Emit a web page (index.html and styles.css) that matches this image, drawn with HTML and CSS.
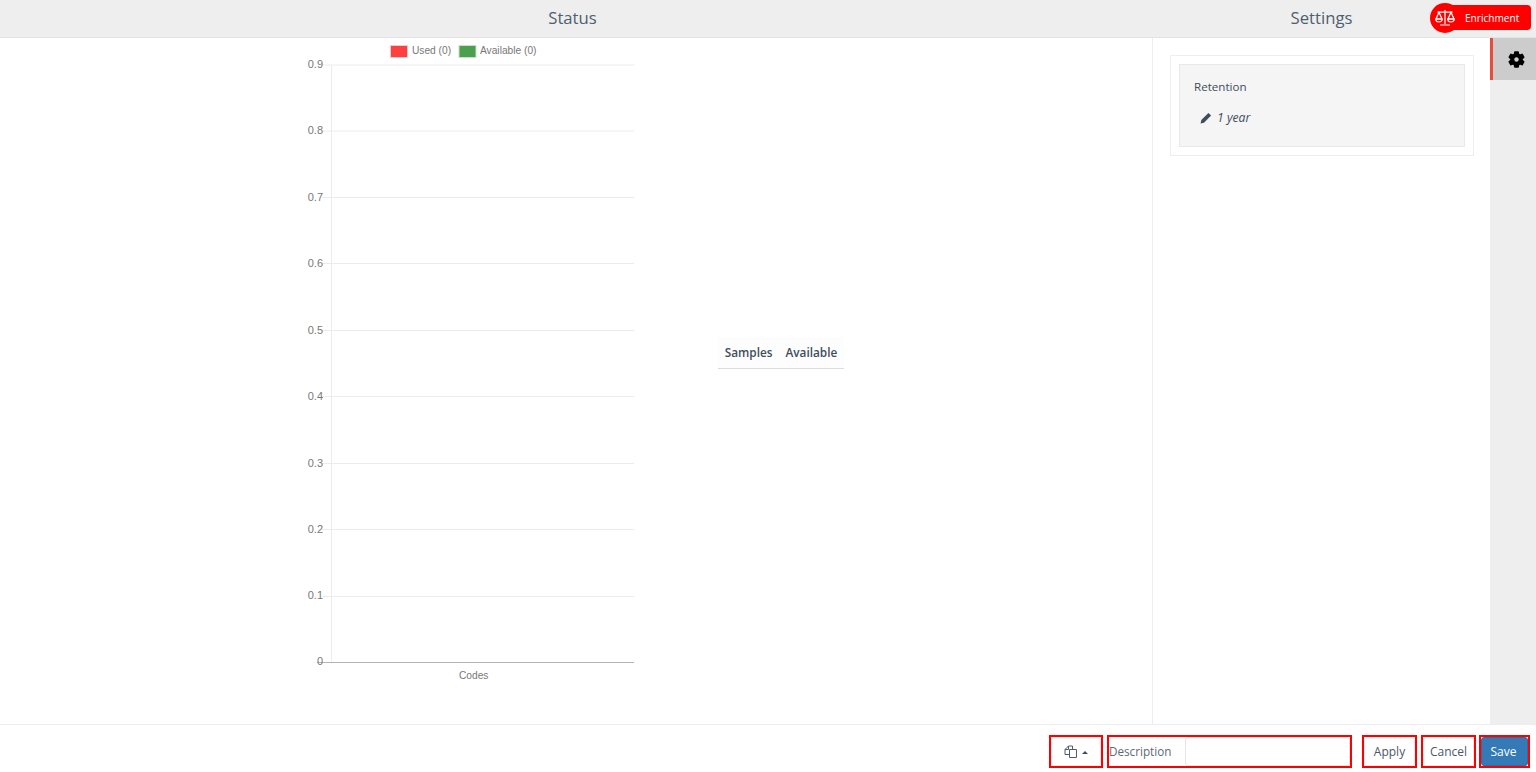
FILE: index.html
```html
<!DOCTYPE html>
<html lang="en">
<head>
<meta charset="utf-8">
<title>Status</title>
<link rel="stylesheet" href="styles.css">
</head>
<body>
<div class="app">
  <header class="head">
    <div class="head-status">Status</div>
    <div class="head-settings">Settings</div>
    <div class="head-rail"></div>
    <div class="enrich">
      <span class="enrich-icon">
        <svg width="20" height="18" viewBox="0 0 20 18" fill="none" stroke="#fff" stroke-width="1.2">
          <path d="M10 1v14M5 16h10M2.5 3.2h15"/>
          <path d="M4 3.2 1 10h6zM16 3.2 13 10h6z"/>
          <path d="M.7 10a3.3 3 0 0 0 6.6 0zM12.7 10a3.3 3 0 0 0 6.6 0z"/>
        </svg>
      </span>
      <span class="enrich-label">Enrichment</span>
    </div>
  </header>
  <main class="body">
    <section class="status">
      <svg class="chart" width="360" height="660" viewBox="290 38 360 660">
        <rect class="leg-red" x="390.5" y="45.5" width="17" height="12"/>
        <text class="lbl" x="412" y="54">Used (0)</text>
        <rect class="leg-green" x="459" y="45.5" width="17" height="12"/>
        <text class="lbl" x="480" y="54">Available (0)</text>
        <g class="grid">
          <path d="M322 65H634M322 131H634M322 197.500H634M322 263.500H634M322 330.500H634M322 396.500H634M322 463.500H634M322 529.500H634M322 596.500H634M331.500 65V662"/>
        </g>
        <path class="axis" d="M317 662H634"/>
        <g class="ticks">
          <text x="323" y="68">0.9</text>
          <text x="323" y="134">0.8</text>
          <text x="323" y="201">0.7</text>
          <text x="323" y="267">0.6</text>
          <text x="323" y="334">0.5</text>
          <text x="323" y="400">0.4</text>
          <text x="323" y="467">0.3</text>
          <text x="323" y="533">0.2</text>
          <text x="323" y="599">0.1</text>
          <text x="323" y="665">0</text>
        </g>
        <text class="lbl" x="459" y="679">Codes</text>
      </svg>
      <div class="samples">
        <span>Samples</span>
        <span>Available</span>
      </div>
    </section>
    <section class="settings">
      <div class="outer">
        <div class="well">
          <div class="well-title">Retention</div>
          <div class="well-value">
            <svg width="12" height="12" viewBox="0 0 12 12"><path fill="#3f4d5c" d="M8.400.9 11.100 3.600 4 10.700.6 11.400 1.300 8z"/></svg>
            <em>1 year</em>
          </div>
        </div>
      </div>
    </section>
    <nav class="rail">
      <div class="rail-tab">
        <svg width="19" height="19" viewBox="0 0 24 24"><path fill="#000" fill-rule="evenodd" stroke="#000" stroke-width="1.500" d="M19.140 12.940c.04-.3.06-.61.06-.94 0-.32-.02-.64-.07-.94l2.030-1.580c.18-.14.23-.41.12-.61l-1.920-3.320c-.12-.22-.37-.29-.59-.22l-2.390.96c-.5-.38-1.030-.7-1.620-.94l-.36-2.540c-.04-.24-.24-.41-.48-.41h-3.840c-.24 0-.43.17-.47.41l-.36 2.540c-.59.24-1.130.57-1.620.94l-2.390-.96c-.22-.08-.47 0-.59.22L2.740 8.870c-.12.21-.08.47.12.61l2.030 1.580c-.05.3-.09.63-.09.94s.02.64.07.94l-2.030 1.580c-.18.14-.23.41-.12.61l1.920 3.320c.12.22.37.29.59.22l2.390-.96c.5.38 1.030.7 1.620.94l.36 2.540c.05.24.24.41.48.41h3.840c.24 0 .44-.17.47-.41l.36-2.540c.59-.24 1.130-.56 1.620-.94l2.390.96c.22.08.47 0 .59-.22l1.920-3.320c.12-.22.07-.47-.12-.61l-2.010-1.580zM12 15.600c-1.980 0-3.600-1.620-3.600-3.600s1.620-3.600 3.600-3.600 3.600 1.620 3.600 3.600-1.620 3.600-3.600 3.600z"/></svg>
      </div>
    </nav>
  </main>
  <footer class="foot">
    <div class="mark mark-clone">
      <button class="btn btn-clone" type="button">
        <svg width="13" height="13" viewBox="0 0 13 13" fill="none" stroke="#4f5c69" stroke-width="1"><path d="M5.500 4.500h7v8h-7z"/><path d="M5.500 9.500H1V4.500L4.500 1H8.500v3.500"/><path d="M4.500 1v3.500H1"/></svg>
        <span class="caret"></span>
      </button>
    </div>
    <div class="mark mark-desc">
      <label class="desc-label" for="desc">Description</label>
      <input class="desc-input" id="desc" type="text">
    </div>
    <div class="mark mark-btn apply"><button class="btn" type="button">Apply</button></div>
    <div class="mark mark-btn cancel"><button class="btn" type="button">Cancel</button></div>
    <div class="mark mark-save"><button class="btn btn-save" type="button">Save</button></div>
  </footer>
</div>
</body>
</html>
```
FILE: styles.css
```css
* { box-sizing: border-box; }
html, body { margin: 0; height: 100%; }
body { font-family: "Open Sans", "Liberation Sans", sans-serif; color: #3f4d5c; background: #fff; overflow: hidden; }
.app { height: 772px; display: flex; flex-direction: column; }

.head { position: relative; height: 38px; flex: none; display: flex; background: #eee; border-bottom: 1px solid #e3e3e3; font-size: 16.7px; line-height: 36px; color: #4f5f6f; }
.head-status { width: 1145px; text-align: center; }
.head-settings { width: 345px; padding-left: 8px; text-align: center; }
.head-rail { flex: 1; }

.enrich { position: absolute; left: 1430px; top: 3px; width: 101px; height: 30px; }
.enrich-icon { position: absolute; left: 0; top: 0; z-index: 1; width: 30px; height: 30px; border-radius: 50%; background: #f00; display: flex; align-items: center; justify-content: center; }
.enrich-label { position: absolute; left: 5px; top: 2px; right: 0; height: 25px; border-radius: 4px; background: #f00; color: #fff; font-size: 10.1px; line-height: 26px; padding-left: 30px; }

.body { flex: 1; display: flex; min-height: 0; }
.status { width: 1152px; flex: none; display: flex; align-items: flex-start; padding-left: 290px; }
.chart { display: block; flex: none; }
.lbl { font: 10.200px "Liberation Sans", sans-serif; fill: #777; opacity: .99; }
.ticks { opacity: .99; }
.ticks text { font: 11px "Liberation Sans", sans-serif; fill: #777; text-anchor: end; }
.leg-red { fill: #ff4040; stroke: #eecccc; }
.leg-green { fill: #4c9f4c; stroke: #cde0cd; }
.grid path { fill: none; stroke: #ececec; stroke-width: 1; }
.axis { fill: none; stroke: #b4b4b4; stroke-width: 1; shape-rendering: crispEdges; }

.samples { margin: 299px 0 0 68px; width: 126px; height: 32px; padding-bottom: 1px; display: flex; gap: 13px; justify-content: center; align-items: center; border-bottom: 1px solid #ddd; background: #fdfdfd; font-size: 11.800px; font-weight: 600; color: #3f4d5c; }

.settings { width: 338px; flex: none; border-left: 1px solid #eee; padding: 17px 16px 0 17px; }
.outer { height: 101px; border: 1px solid #eee; padding: 8px; }
.well { height: 83px; background: #f5f5f5; border: 1px solid #e8e8e8; padding: 13px 14px; font-size: 11.600px; }
.well-title { line-height: 18px; }
.well-value { margin-top: 13px; padding-left: 6px; display: flex; align-items: center; gap: 5px; line-height: 18px; }
.well-value em { font-size: 12.200px; }

.rail { flex: 1; background: #eee; }
.rail-tab { height: 42px; background: #ccc; border-left: 3px solid #e74c3c; display: flex; align-items: center; justify-content: center; padding-left: 3px; }

.foot { height: 48px; flex: none; border-top: 1px solid #eee; padding: 10px 6px 0 1049px; display: flex; align-items: flex-start; }
.mark { height: 33px; border: 2px solid #f00; display: flex; flex: none; }
.mark-clone { width: 54px; }
.mark-desc { width: 245px; margin-left: 4px; align-items: stretch; }
.mark-btn { width: 55px; }
.apply { margin-left: 10px; }
.cancel { margin-left: 4px; }
.mark-save { width: 51px; margin-left: 3px; }
.btn { flex: 1; min-width: 0; margin: 0; padding: 0; border: 1px solid #eee; border-radius: 3px; background: #fff; color: #4a5866; font: 12px "Open Sans", sans-serif; display: flex; align-items: center; justify-content: center; gap: 6px; }
.btn-clone { gap: 5px; }
.btn-save { background: #337ab7; border-color: #2e6da4; color: #fff; padding-right: 2px; }
.caret { width: 0; height: 0; border-left: 3px solid transparent; border-right: 3px solid transparent; border-bottom: 3px solid #3f4d5c; margin-top: 2px; }
.desc-label { width: 76px; flex: none; font-size: 11.700px; line-height: 29px; color: #5c6a77; }
.desc-input { flex: 1; min-width: 0; margin: 0; border: 1px solid #e6e6e6; border-radius: 3px; background: #fff; }
```
